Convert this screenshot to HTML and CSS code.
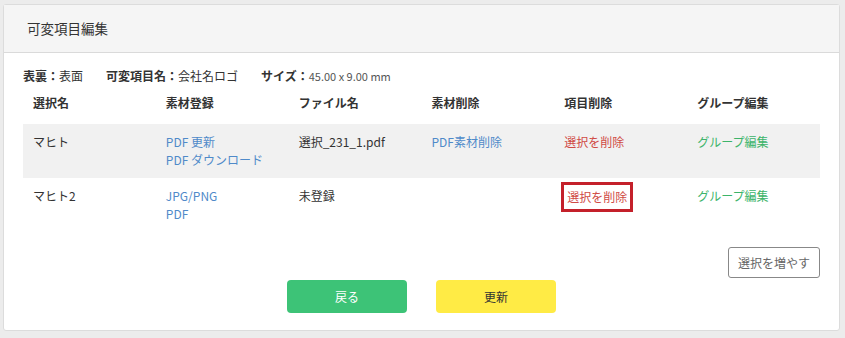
FILE: index.html
```html
<!DOCTYPE html>
<html lang="ja">
<head>
  <meta charset="UTF-8">
  <meta name="viewport" content="width=device-width, initial-scale=1.0">
  <title>可変項目編集</title>
  <link rel="stylesheet" href="styles.css">
</head>
<body>

  <div class="card">
    <div class="card-header">可変項目編集</div>

    <div class="card-body">
      <div class="info">
        <span class="info-item"><b>表裏：</b>表面</span>
        <span class="info-item"><b>可変項目名：</b>会社名ロゴ</span>
        <span class="info-item"><b>サイズ：</b><span class="size">45.00 x 9.00 mm</span></span>
      </div>

      <table class="item-table">
        <thead>
          <tr>
            <th>選択名</th>
            <th>素材登録</th>
            <th>ファイル名</th>
            <th>素材削除</th>
            <th>項目削除</th>
            <th>グループ編集</th>
          </tr>
        </thead>
        <tbody>
          <tr class="striped">
            <td>マヒト</td>
            <td><a class="link-blue">PDF 更新</a><br><a class="link-blue">PDF ダウンロード</a></td>
            <td>選択_231_1.pdf</td>
            <td><a class="link-blue">PDF素材削除</a></td>
            <td><a class="link-red">選択を削除</a></td>
            <td><a class="link-green">グループ編集</a></td>
          </tr>
          <tr>
            <td>マヒト2</td>
            <td><a class="link-blue">JPG/PNG</a><br><a class="link-blue">PDF</a></td>
            <td>未登録</td>
            <td></td>
            <td><a class="link-red marked">選択を削除</a></td>
            <td><a class="link-green">グループ編集</a></td>
          </tr>
        </tbody>
      </table>

      <div class="more-row">
        <button class="btn-more">選択を増やす</button>
      </div>

      <div class="actions">
        <button class="btn btn-back">戻る</button>
        <button class="btn btn-update">更新</button>
      </div>
    </div>
  </div>

</body>
</html>
```

FILE: styles.css
```css
:root {
  font-size: 12px;
}

body, html {
  margin: 0;
  padding: 0;
  box-sizing: border-box;
  height: 100%;
}

body {
  background-color: #ececec;
  font-family: "Noto Sans CJK JP", "Noto Sans", sans-serif;
  color: #333;
  padding: 4px 5px 6px 3px;
}

.card {
  background-color: #fff;
  border: 1px solid #dcdcdc;
  border-radius: 3px;
}

.card-header {
  height: 47px;
  line-height: 47px;
  padding-left: 23px;
  background-color: #f5f5f5;
  border-bottom: 1px solid #dadada;
  font-size: 13.5px;
  color: #333;
}

.card-body {
  padding: 14px 19px 17px 19px;
}

.info {
  display: flex;
  gap: 23px;
  line-height: 18px;
  font-size: 12px;
}

.info b {
  font-weight: bold;
}

.size {
  font-size: 11px;
  color: #555;
}

.item-table {
  width: 100%;
  border-collapse: collapse;
  table-layout: fixed;
  margin-top: 9px;
}

.item-table th {
  text-align: left;
  font-weight: bold;
  line-height: 18px;
  padding: 0 10px 12px 10px;
}

.item-table td {
  vertical-align: top;
  line-height: 18px;
  padding: 9px 10px;
}

.item-table tr.striped td {
  background-color: #f1f1f1;
}

.link-blue {
  color: #4f8ac9;
}

.link-red {
  color: #d04a45;
}

.link-green {
  color: #3cb46a;
}

.marked {
  display: inline-block;
  margin: -5px 0 0 -3px;
  padding: 2px 3px 2px 3px;
  line-height: 20px;
  border: 3px solid #c4202a;
}

.more-row {
  display: flex;
  justify-content: flex-end;
  margin-top: 15px;
}

.btn-more {
  height: 31px;
  padding: 0 9px;
  background-color: #fff;
  border: 1px solid #888;
  border-radius: 3px;
  font-family: inherit;
  font-size: 12px;
  color: #666;
}

.actions {
  display: flex;
  justify-content: center;
  gap: 29px;
  margin-top: 2px;
}

.btn {
  width: 120px;
  height: 33px;
  border: none;
  border-radius: 4px;
  font-family: inherit;
  font-size: 12px;
}

.btn-back {
  background-color: #3dc377;
  color: #fff;
}

.btn-update {
  background-color: #ffeb45;
  color: #333;
}
```
